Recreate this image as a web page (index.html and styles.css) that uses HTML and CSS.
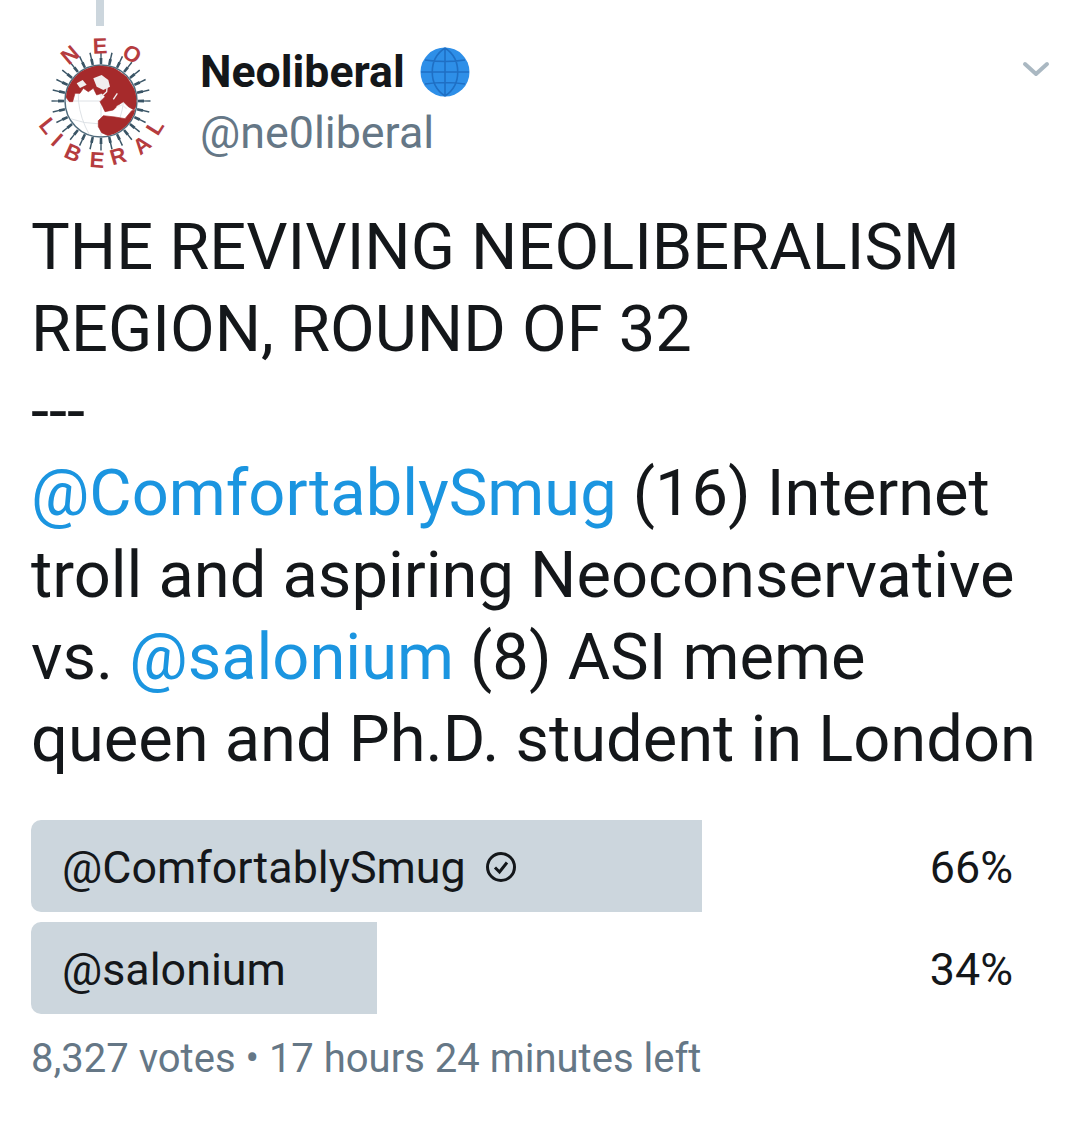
FILE: index.html
```html
<!DOCTYPE html>
<html lang="en">
<head>
<meta charset="utf-8">
<title>Neoliberal poll</title>
<link rel="stylesheet" href="styles.css">
</head>
<body>
<main class="tweet">
  <div class="thread-line"></div>
  <header class="head">
    <svg class="avatar" viewBox="32 32 140 140" aria-hidden="true">
      <circle class="rays rays-in" cx="101" cy="101" r="40" pathLength="28"/>
      <circle class="rays rays-out" cx="101" cy="101" r="45" pathLength="28"/>
      <circle class="sphere" cx="101" cy="101" r="36"/>
      <clipPath id="ball"><circle cx="101" cy="101" r="35.5"/></clipPath>
      <g clip-path="url(#ball)">
        <path class="grid" d="M65 101H137M66 88Q101 74 136 88M68 118Q101 130 134 118M101 66V136M84 68Q70 100 90 136M118 68Q132 100 112 136M75 76Q100 66 127 76"/>
        <g transform="translate(60 60) scale(.3333)">
          <path class="land" d="M18 112 22 80 40 50 70 30 110 16 160 22 200 50 228 95 234 130 222 150 205 140 190 125 175 135 160 150 135 155 128 140 120 125 135 110 125 100 110 105 100 85 85 95 70 85 60 100 45 100 38 125 28 125Z"/>
          <path class="inlet" d="M100 55 125 45 145 60 150 80 130 90 110 80Z"/>
          <path class="inlet" d="M50 70 68 60 80 74 60 84Z"/>
          <path class="vein" d="M122 112 140 95 142 72M160 118 172 100M170 140 186 135 200 146"/>
          <path class="land" d="M115 182 130 167 165 171 195 176 215 152 230 150 218 186 190 216 160 234 125 218 115 200Z"/>
        </g>
      </g>
      <g class="letters">
        <text x="70" y="55" transform="rotate(-40 70 55)">N</text>
        <text x="100" y="46" transform="rotate(-2 100 46)">E</text>
        <text x="132" y="54" transform="rotate(35 132 54)">O</text>
        <text x="48" y="126" transform="rotate(52 48 126)">L</text>
        <text x="57" y="140" transform="rotate(42 57 140)">I</text>
        <text x="73" y="153" transform="rotate(24 73 153)">B</text>
        <text x="97" y="160" transform="rotate(4 97 160)">E</text>
        <text x="118" y="156" transform="rotate(-16 118 156)">R</text>
        <text x="142" y="145" transform="rotate(-38 142 145)">A</text>
        <text x="155" y="127" transform="rotate(-58 155 127)">L</text>
      </g>
    </svg>
    <div class="names">
      <div class="display">
        <span>Neoliberal</span>
        <svg class="emoji" viewBox="0 0 50 50" aria-hidden="true">
          <circle class="emoji-fill" cx="25" cy="25" r="24.5"/>
          <path class="emoji-lines" d="M25 1V49M1 25H49M5 13Q25 16 45 13M5 37Q25 34 45 37M25 1C8 12 8 38 25 49M25 1C42 12 42 38 25 49"/>
        </svg>
      </div>
      <div class="handle">@ne0liberal</div>
    </div>
    <svg class="chevron" viewBox="0 0 28 16" aria-hidden="true"><path d="M3 3 14 13 25 3"/></svg>
  </header>
  <p class="body">THE REVIVING NEOLIBERALISM<br>REGION, ROUND OF 32<br>---<br><a>@ComfortablySmug</a> (16) Internet<br>troll and aspiring Neoconservative<br>vs. <a>@salonium</a> (8) ASI meme<br>queen and Ph.D. student in London</p>
  <section class="poll">
    <div class="option">
      <div class="bar" style="width:671px"></div>
      <span class="label">@ComfortablySmug
        <svg class="check" viewBox="0 0 32 32" aria-hidden="true"><circle cx="16" cy="16" r="13.5"/><path d="M10 16.5 14.5 21 22 11.5"/></svg>
      </span>
      <span class="pct">66%</span>
    </div>
    <div class="option">
      <div class="bar" style="width:346px"></div>
      <span class="label">@salonium</span>
      <span class="pct">34%</span>
    </div>
  </section>
  <p class="meta">8,327 votes • 17 hours 24 minutes left</p>
</main>
</body>
</html>
```
FILE: styles.css
```css
* { box-sizing: border-box; }
html, body { margin: 0; background: #fff; }
body { width: 1080px; height: 1129px; overflow: hidden; font-family: Roboto, "Liberation Sans", sans-serif; color: #14171a; }
.tweet { position: relative; padding: 0 31px; }
.thread-line { position: absolute; left: 96px; top: 0; width: 8px; height: 26px; background: #ccd6dd; }
.head { display: flex; align-items: flex-start; padding-top: 32px; height: 206px; margin-left: 1px; }
.avatar { width: 140px; height: 140px; flex: none; }
.rays { fill: none; stroke: #3a5566; stroke-dasharray: var(--d) calc(1 - var(--d)); stroke-dashoffset: calc(var(--d) / 2); }
.rays-in { --d: .3; stroke-width: 6; }
.rays-out { --d: .14; stroke-width: 9; }
.sphere { fill: #fff; stroke: #4f6b7c; stroke-width: 1.5; }
.grid { fill: none; stroke: #d5dbe0; stroke-width: .8; }
.land { fill: #a62a2b; stroke: #a62a2b; stroke-width: 2; stroke-linejoin: round; }
.inlet { fill: #f1eeee; }
.vein { fill: none; stroke: #f1eeee; stroke-width: 4; }
.letters text { font: 700 22px "Liberation Sans", sans-serif; fill: #b53c3f; text-anchor: middle; dominant-baseline: central; }
.names { margin-left: 28px; padding-top: 12px; flex: 1; }
.display { display: flex; align-items: center; gap: 15px; font-size: 44.6px; font-weight: 700; line-height: 56px; height: 56px; }
.emoji { width: 50px; height: 50px; }
.emoji-fill { fill: #2e8fe8; }
.emoji-lines { fill: none; stroke: #1f6fc4; stroke-width: 1.6; }
.handle { font-size: 44.8px; line-height: 66px; color: #657786; }
.chevron { width: 28px; height: 16px; margin: 29px -1px 0 0; flex: none; }
.chevron path { fill: none; stroke: #aab8c2; stroke-width: 4; stroke-linecap: round; stroke-linejoin: round; }
.body { margin: 0; font-size: 65px; line-height: 82px; white-space: nowrap; }
.body a { color: #1b95e0; }
.poll { margin-top: 40px; display: flex; flex-direction: column; gap: 10px; }
.option { position: relative; height: 92px; display: flex; align-items: center; justify-content: space-between; padding: 2px 36px 0 31px; font-size: 44.8px; }
.bar { position: absolute; left: 0; top: 0; height: 100%; background: #ccd6dd; border-radius: 10px 0 0 10px; }
.label, .pct { position: relative; }
.check { width: 32px; height: 32px; margin-left: 8px; vertical-align: 0; }
.check circle, .check path { fill: none; stroke: #14171a; stroke-width: 3; }
.meta { margin: 20px 0 0; font-size: 40px; line-height: 50px; color: #657786; }
```
